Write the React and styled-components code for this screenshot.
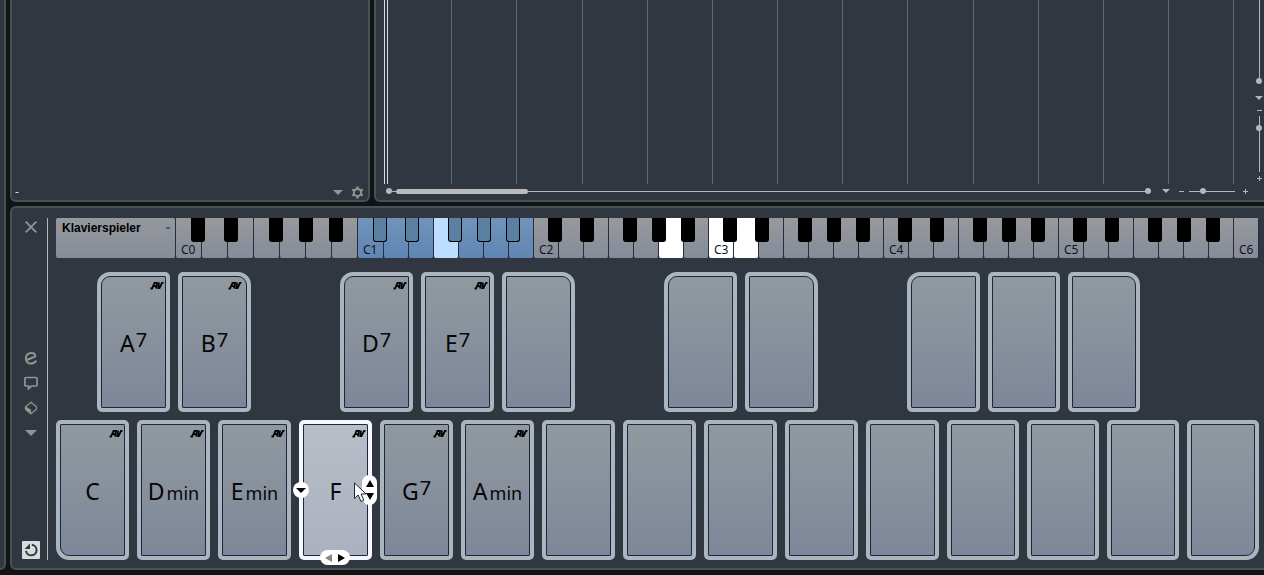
import React from "react";
import styled, { createGlobalStyle, css } from "styled-components";

const theme = {
  backdrop: "#111415",
  panel: "#303740",
  edge: "#485058",
  line: "#b4b6b8",
  icon: "#8f978f",
  grid: "#5c6d78",
  font: '"Noto Sans", "Open Sans", sans-serif',
};

const GlobalStyle = createGlobalStyle`
  * {
    box-sizing: border-box;
  }

  body {
    margin: 0;
    overflow: hidden;
    background-color: ${theme.backdrop};
    font-family: ${theme.font};
  }

  button {
    padding: 0;
    border: 0;
    background: none;
    font-family: inherit;
    color: inherit;
  }
`;

const StyledWindow = styled.div`
  display: flex;
  gap: 4px;
  min-height: 100vh;
  padding-bottom: 5px;
`;

const StyledStrip = styled.div`
  width: 6px;
  flex: none;
  background-color: ${theme.panel};
  border: 2px solid ${theme.edge};
  border-width: 0 2px 2px 0;
  border-bottom-right-radius: 6px;
`;

const StyledMain = styled.div`
  flex: 1;
  min-width: 0;
  display: flex;
  flex-direction: column;
  gap: 4px;
`;

const StyledTop = styled.div`
  flex: 1;
  display: flex;
  gap: 4px;
`;

const StyledInspector = styled.section`
  width: 360px;
  flex: none;
  display: flex;
  align-items: flex-end;
  gap: 3px;
  padding: 0 3px;
  background-color: ${theme.panel};
  border: 2px solid ${theme.edge};
  border-top: 0;
  border-radius: 0 0 6px 6px;
`;

const StyledStatus = styled.span`
  flex: 1;
  color: #d8dadc;
  font-size: 12px;
  line-height: 16px;
`;

const StyledEditor = styled.section`
  flex: 1;
  min-width: 0;
  display: grid;
  grid-template-columns: 1fr 10px;
  grid-template-rows: 1fr 16px;
  padding-left: 8px;
  color: ${theme.line};
  background-color: ${theme.panel};
  border: 2px solid ${theme.edge};
  border-width: 0 0 2px 2px;
  border-bottom-left-radius: 6px;
`;

const StyledGrid = styled.div`
  display: flex;
  border-left: 4px double #d8dadc;
`;

const StyledBar = styled.div`
  flex: 65 1 0;
  border-right: 1px solid ${theme.grid};

  :first-child& {
    flex-grow: 64;
  }

  :last-child& {
    flex-grow: 20;
    border-right: 0;
  }
`;

const StyledScroll = styled.div`
  display: flex;
  align-items: center;
  ${({ vertical }) =>
    vertical
      ? css`
          flex-direction: column;
        `
      : css`
          grid-column: 1 / -1;
          padding: 0 13px 2px 2px;
        `}
`;

const StyledTrack = styled.div`
  position: relative;
  flex: 1;
  ${({ vertical }) =>
    vertical
      ? css`
          width: 1px;
          margin-bottom: 8px;
        `
      : css`
          height: 1px;
          margin-right: 4px;
        `}
  background-color: ${theme.line};
`;

const dotEnds = {
  left: css`
    left: 0;
    top: -3px;
  `,
  right: css`
    right: 0;
    top: -3px;
  `,
  bottom: css`
    left: -3px;
    bottom: 0;
  `,
};

const StyledDot = styled.span`
  position: absolute;
  width: 6px;
  height: 6px;
  border-radius: 3px;
  background-color: ${theme.line};
  ${({ end }) => dotEnds[end]}
`;

const StyledThumb = styled.span`
  position: absolute;
  top: -2px;
  left: 10px;
  width: 132px;
  height: 5px;
  border-radius: 3px;
  background-color: #bcbbbb;
`;

const StyledZoom = styled.input`
  appearance: none;
  flex: none;
  ${({ vertical }) =>
    vertical
      ? css`
          writing-mode: vertical-lr;
          width: 7px;
          height: 56px;
          margin: 0;
        `
      : css`
          width: 46px;
          height: 7px;
          margin: 0 4px;
        `}
  background: linear-gradient(${theme.line}, ${theme.line}) center / ${({ vertical }) =>
    vertical ? "1px 100%" : "100% 1px"} no-repeat;

  &::-webkit-slider-thumb {
    appearance: none;
    width: 6px;
    height: 6px;
    border-radius: 3px;
    background-color: ${theme.line};
  }
`;

const StyledIconButton = styled.button`
  display: flex;
  align-items: center;
  justify-content: center;
  flex: none;
  width: ${({ width }) => width}px;
  height: ${({ height }) => height}px;
  color: ${({ light }) => (light ? theme.line : theme.icon)};
`;

const StyledPads = styled.section`
  display: flex;
  padding: 10px 5px 8px 0;
  background-color: ${theme.panel};
  border: 2px solid ${theme.edge};
  border-right: 0;
  border-radius: 6px 0 0 6px;
`;

const StyledTools = styled.div`
  width: 36px;
  flex: none;
  display: flex;
  flex-direction: column;
  align-items: center;
  justify-content: space-between;
  padding: 0 0 1px 2px;
  border-right: 1px solid ${theme.line};
`;

const StyledToolGroup = styled.div`
  display: flex;
  flex-direction: column;
  gap: 5px;
  margin-top: 14px;
`;

const StyledContent = styled.div`
  flex: 1;
  min-width: 0;
  display: flex;
  flex-direction: column;
  gap: 8px;
  padding-left: 8px;
`;

const StyledKeyboard = styled.div`
  display: flex;
  height: 40px;
  margin-bottom: 6px;
`;

const StyledPlayer = styled.button`
  width: 120px;
  flex: none;
  display: flex;
  justify-content: space-between;
  align-items: flex-start;
  padding: 2px 4px 0 6px;
  color: #000;
  font-family: "Liberation Sans", Arial, sans-serif;
  font-size: 12px;
  font-weight: bold;
  line-height: 16px;
  background: linear-gradient(#95999d, #878c99);
  border-right: 1px solid #252d40;
  border-radius: 2px;

  svg {
    margin-top: 7px;
    color: #555a60;
  }
`;

const keyTones = {
  plain: "linear-gradient(#97999c, #868b99)",
  blue: "linear-gradient(#7093b9, #6086b3)",
  light: "#bcdfff",
  white: "#ffffff",
};

const StyledKeySlot = styled.div`
  position: relative;
  flex: ${({ wide }) => (wide ? 26 : 25)} 1 0;
  min-width: 0;
`;

const StyledWhiteKey = styled.button`
  display: flex;
  align-items: flex-end;
  width: 100%;
  height: 100%;
  padding: 0 0 0 5px;
  color: #10131c;
  font-size: 12px;
  line-height: 16px;
  background: ${({ tone }) => keyTones[tone]};
  border-right: 1px solid #252d40;
  border-radius: 0 0 2px 2px;
`;

const StyledBlackKey = styled.button`
  position: absolute;
  z-index: 1;
  top: 0;
  right: ${({ shift }) => shift}px;
  width: 14px;
  height: 24px;
  background-color: ${({ blue }) => (blue ? "#5b80a1" : "#000")};
  border: 1px solid #000;
  border-top: 0;
  border-radius: 0 0 3px 3px;
`;

const StyledPadRow = styled.div`
  display: flex;
  gap: 8px;
  ${({ upper }) =>
    upper &&
    css`
      padding: 0 119px 0 41px;
    `}
`;

const StyledPadSlot = styled.div`
  position: relative;
  flex: ${({ narrow }) => (narrow ? 72 : 73)} 1 0;
  min-width: 0;
  height: 140px;
`;

const corners = {
  topLeft: ["13px 5px 5px 5px", "9px 1px 1px 1px"],
  topRight: ["5px 13px 5px 5px", "1px 9px 1px 1px"],
  bottomLeft: ["5px 5px 5px 13px", "1px 1px 1px 9px"],
  bottomRight: ["5px 5px 13px 5px", "1px 1px 9px 1px"],
  none: ["5px", "1px"],
};

const StyledPad = styled.button`
  display: block;
  width: 100%;
  height: 100%;
  padding: 4px;
  background-color: ${({ active }) => (active ? "#f4f7ff" : "#abb5be")};
  border-radius: ${({ corner }) => corners[corner][0]};
`;

const StyledFace = styled.span`
  position: relative;
  display: flex;
  align-items: center;
  justify-content: center;
  height: 100%;
  padding-top: 2px;
  color: #050608;
  font-size: 23px;
  line-height: 28px;
  background: ${({ active }) =>
    active ? "linear-gradient(#b7bec6, #acb1c0)" : "linear-gradient(#91999f, #7e8799)"};
  border: 1px solid #1b2740;
  border-radius: ${({ corner }) => corners[corner][1]};
`;

const StyledSuffix = styled.span`
  margin-left: 2px;
  font-size: 18px;
  line-height: 18px;
  ${({ raised }) =>
    raised &&
    css`
      margin-left: 1px;
      font-size: 20px;
      vertical-align: 5px;
    `}
`;

const StyledMark = styled.svg`
  position: absolute;
  top: 4px;
  right: ${({ $inset }) => ($inset ? 4 : 1)}px;
`;

const handlePlaces = {
  left: css`
    left: -6px;
    top: 62px;
    width: 16px;
    height: 16px;
  `,
  right: css`
    right: -5px;
    top: 55px;
    width: 15px;
    height: 30px;
  `,
  bottom: css`
    left: 21px;
    bottom: -5px;
    width: 30px;
    height: 15px;
  `,
};

const StyledHandle = styled.button`
  position: absolute;
  z-index: 1;
  display: flex;
  align-items: center;
  justify-content: center;
  color: #000;
  background-color: #fff;
  border-radius: 8px;
  ${({ place }) => handlePlaces[place]}
`;

const StyledPointer = styled.svg`
  position: absolute;
  z-index: 2;
  left: 55px;
  top: 62px;
  pointer-events: none;
`;

const Triangle = ({ width = 10, height = 5 }) => (
  <svg width={width} height={height} viewBox="0 0 10 5" preserveAspectRatio="none">
    <path d="M0 0h10L5 5z" fill="currentColor" />
  </svg>
);

const Minus = () => (
  <svg width="5" height="5" viewBox="0 0 5 5">
    <path d="M0 2h5v1H0z" fill="currentColor" />
  </svg>
);

const Plus = () => (
  <svg width="5" height="5" viewBox="0 0 5 5">
    <path d="M0 2h5v1H0zM2 0h1v5H2z" fill="currentColor" />
  </svg>
);

const Gear = () => (
  <svg width="13" height="13" viewBox="0 0 13 13" fill="none" stroke="currentColor">
    <circle cx="6.500" cy="6.500" r="3.600" strokeWidth="2" />
    <path
      d="M6.500 .5v2M6.500 10.500v2M1.300 3.500l1.700 1M10 8.500l1.700 1M1.300 9.500l1.700-1M10 4.500l1.700-1"
      strokeWidth="2.400"
    />
  </svg>
);

const Close = () => (
  <svg width="12" height="12" viewBox="0 0 12 12" stroke="currentColor" strokeWidth="1.800">
    <path d="M.7 .7l10.600 10.600M11.300 .7L.7 11.300" />
  </svg>
);

const EditMark = () => (
  <svg width="14" height="14" viewBox="0 0 14 14" fill="none" stroke="currentColor" strokeWidth="2">
    <path d="M3 9L11.300 5.300C11.300 2.800 9.400 1.900 7.300 1.900C4 1.900 1.900 4.300 1.900 7.500C1.900 10.600 4 12.600 6.800 12.600C9 12.600 10.800 11.600 12.200 9.600" />
  </svg>
);

const Bubble = () => (
  <svg width="14" height="14" viewBox="0 0 14 14" fill="none" stroke="currentColor" strokeWidth="1.700">
    <path d="M2 1.500H12Q13.100 1.500 13.100 2.600V8.900Q13.100 10 12 10H7.500L4.500 12.700V10H2Q.9 10 .9 8.900V2.600Q.9 1.500 2 1.500z" />
  </svg>
);

const Cube = () => (
  <svg width="14" height="14" viewBox="0 0 14 14">
    <path
      d="M7 1.200L12.500 5.800V8.300L7 12.800L1.500 8.300V5.800z"
      fill="none"
      stroke="currentColor"
      strokeWidth="1.200"
    />
    <path d="M1 5L7 8.800V13.400L1 8.800z" fill="currentColor" />
  </svg>
);

const Reload = () => (
  <svg width="18" height="18" viewBox="0 0 18 18">
    <rect width="18" height="18" rx="1" fill="#d9dcde" />
    <path d="M9.800 3.800A5.300 5.300 0 1 1 4 9.800" fill="none" stroke="#303740" strokeWidth="2" />
    <path d="M2.500 8L8 2.500V8z" fill="#303740" />
  </svg>
);

const blackShift = { 0: -3, 1: -10, 3: -3, 4: -7, 5: -11 };
const noteNames = ["C", "D", "E", "F", "G", "A", "B"];
const litKeys = { 10: "light", 19: "white", 21: "white", 22: "white" };

const getTone = (index) => litKeys[index] || (index >= 7 && index < 14 ? "blue" : "plain");

const Key = ({ index }) => {
  const step = index % 7;
  const octave = Math.floor(index / 7);
  const hasBlack = step in blackShift && index < 42;

  return (
    <StyledKeySlot wide={index < 8}>
      <StyledWhiteKey tone={getTone(index)} aria-label={`${noteNames[step]}${octave}`}>
        {step === 0 && `C${octave}`}
      </StyledWhiteKey>
      {hasBlack && (
        <StyledBlackKey
          shift={blackShift[step]}
          blue={octave === 1}
          aria-label={`${noteNames[step]}#${octave}`}
        />
      )}
    </StyledKeySlot>
  );
};

const upperPads = [
  { root: "A", raised: "7", corner: "topLeft" },
  { root: "B", raised: "7", corner: "topRight" },
  null,
  { root: "D", raised: "7", corner: "topLeft" },
  { root: "E", raised: "7" },
  { corner: "topRight" },
  null,
  { corner: "topLeft" },
  { corner: "topRight" },
  null,
  { corner: "topLeft" },
  { narrow: true },
  { corner: "topRight", narrow: true },
];

const lowerPads = [
  { root: "C", corner: "bottomLeft" },
  { root: "D", suffix: "min" },
  { root: "E", suffix: "min" },
  { root: "F", active: true },
  { root: "G", raised: "7" },
  { root: "A", suffix: "min" },
  {},
  {},
  {},
  {},
  {},
  { narrow: true },
  { narrow: true },
  { narrow: true },
  { corner: "bottomRight", narrow: true },
];

const Pad = ({ root, raised, suffix, corner = "none", active, narrow }) => (
  <StyledPadSlot narrow={narrow}>
    <StyledPad corner={corner} active={active} aria-label={root ? undefined : "Empty pad"}>
      <StyledFace corner={corner} active={active}>
        <span>
          {root}
          {raised && <StyledSuffix raised>{raised}</StyledSuffix>}
          {suffix && <StyledSuffix>{suffix}</StyledSuffix>}
        </span>
        {root && (
          <StyledMark $inset={corner === "topRight"} width="14" height="9" viewBox="0 0 14 9">
            <path
              d="M.5 7.500H2L4.500 1.800H7L6 7.500M3 5.200H7M9 1.500L8.300 7H9.500L12 1.800H13.500"
              fill="none"
              stroke="#000"
              strokeWidth="1.800"
            />
          </StyledMark>
        )}
      </StyledFace>
    </StyledPad>
    {active && (
      <>
        <StyledHandle place="left" aria-label="Pad options">
          <Triangle />
        </StyledHandle>
        <StyledHandle place="right" aria-label="Change voicing">
          <svg width="8" height="20" viewBox="0 0 8 20">
            <path d="M4 0L8 7H0zM0 13h8l-4 7z" />
          </svg>
        </StyledHandle>
        <StyledHandle place="bottom" aria-label="Change tension">
          <svg width="20" height="8" viewBox="0 0 20 8">
            <path d="M0 4L7 0v8z" fill="#888" />
            <path d="M20 4L13 0v8z" />
          </svg>
        </StyledHandle>
        <StyledPointer width="15" height="21" viewBox="0 0 15 21">
          <path
            d="M.5 1v15.500l3.700-3.500 2.800 6.500 2.800-1.200-2.700-6.300h5z"
            fill="#fff"
            stroke="#20252e"
          />
        </StyledPointer>
      </>
    )}
  </StyledPadSlot>
);

const App = () => (
  <>
    <GlobalStyle />
    <StyledWindow>
      <StyledStrip />
      <StyledMain>
        <StyledTop>
          <StyledInspector>
            <StyledStatus>-</StyledStatus>
            <StyledIconButton width={16} height={16} aria-label="Show list">
              <Triangle />
            </StyledIconButton>
            <StyledIconButton width={16} height={16} aria-label="Settings">
              <Gear />
            </StyledIconButton>
          </StyledInspector>
          <StyledEditor>
            <StyledGrid>
              {Array.from({ length: 14 }, (_, i) => (
                <StyledBar key={i} />
              ))}
            </StyledGrid>
            <StyledScroll vertical>
              <StyledTrack vertical>
                <StyledDot end="bottom" />
              </StyledTrack>
              <StyledIconButton light width={10} height={12} aria-label="Vertical zoom presets">
                <Triangle width={8} height={4} />
              </StyledIconButton>
              <StyledIconButton light width={10} height={12} aria-label="Zoom out vertically">
                <Minus />
              </StyledIconButton>
              <StyledZoom vertical type="range" defaultValue={18} aria-label="Vertical zoom" />
              <StyledIconButton light width={10} height={12} aria-label="Zoom in vertically">
                <Plus />
              </StyledIconButton>
            </StyledScroll>
            <StyledScroll>
              <StyledTrack>
                <StyledDot end="left" />
                <StyledThumb />
                <StyledDot end="right" />
              </StyledTrack>
              <StyledIconButton light width={22} height={14} aria-label="Horizontal zoom presets">
                <Triangle width={8} height={4} />
              </StyledIconButton>
              <StyledIconButton light width={8} height={14} aria-label="Zoom out">
                <Minus />
              </StyledIconButton>
              <StyledZoom type="range" defaultValue={28} aria-label="Horizontal zoom" />
              <StyledIconButton light width={12} height={14} aria-label="Zoom in">
                <Plus />
              </StyledIconButton>
            </StyledScroll>
          </StyledEditor>
        </StyledTop>
        <StyledPads>
          <StyledTools>
            <StyledIconButton width={18} height={18} aria-label="Close">
              <Close />
            </StyledIconButton>
            <StyledToolGroup>
              <StyledIconButton width={18} height={20} aria-label="Edit">
                <EditMark />
              </StyledIconButton>
              <StyledIconButton width={18} height={20} aria-label="Show comments">
                <Bubble />
              </StyledIconButton>
              <StyledIconButton width={18} height={20} aria-label="Presets">
                <Cube />
              </StyledIconButton>
              <StyledIconButton width={18} height={20} aria-label="More">
                <Triangle width={12} height={6} />
              </StyledIconButton>
            </StyledToolGroup>
            <StyledIconButton width={18} height={18} aria-label="Reset">
              <Reload />
            </StyledIconButton>
          </StyledTools>
          <StyledContent>
            <StyledKeyboard>
              <StyledPlayer>
                Klavierspieler
                <Triangle width={6} height={3} />
              </StyledPlayer>
              {Array.from({ length: 43 }, (_, i) => (
                <Key key={i} index={i} />
              ))}
            </StyledKeyboard>
            <StyledPadRow upper>
              {upperPads.map((pad, i) => (pad ? <Pad key={i} {...pad} /> : <StyledPadSlot key={i} />))}
            </StyledPadRow>
            <StyledPadRow>
              {lowerPads.map((pad, i) => (
                <Pad key={i} {...pad} />
              ))}
            </StyledPadRow>
          </StyledContent>
        </StyledPads>
      </StyledMain>
    </StyledWindow>
  </>
);

export default App;
